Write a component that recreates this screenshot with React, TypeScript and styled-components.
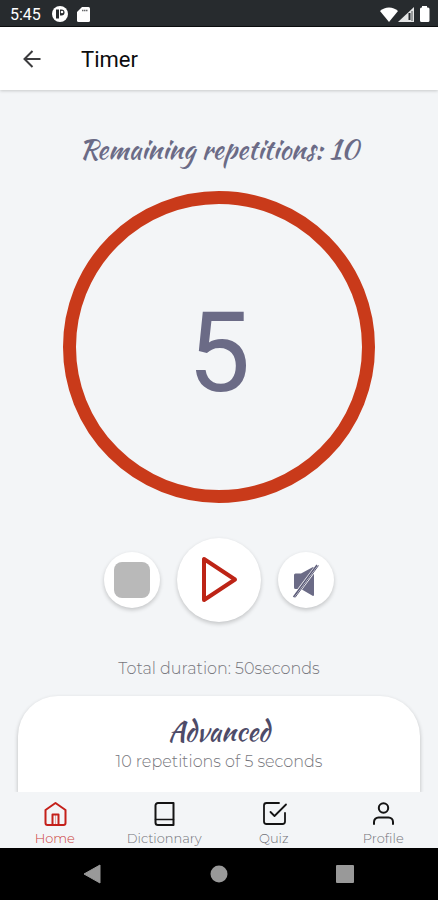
import React from "react";
import styled, { createGlobalStyle } from "styled-components";

const GlobalStyle = createGlobalStyle`
  *, *::before, *::after { box-sizing: border-box; }
  body { margin: 0; background: #f3f5f7; font-family: Roboto, sans-serif; }
  h1, h2, p { margin: 0; }
  button { font: inherit; border: 0; padding: 0; cursor: pointer; }
`;

const Screen = styled.div`
  display: flex;
  flex-direction: column;
  height: 100vh;
  background: #f3f5f7;
`;

const StatusBar = styled.div`
  flex: none;
  display: flex;
  align-items: center;
  justify-content: space-between;
  height: 27px;
  padding: 2px 8px 0 10px;
  background: #272b2e;
  border-bottom: 1px solid #0c0e0f;
  color: #fff;
  font-size: 16px;
`;

const StatusGroup = styled.div<{ $gap: number }>`
  display: flex;
  align-items: center;
  gap: ${(p) => p.$gap}px;
`;

const Clock = styled.span`
  margin-right: 2px;
`;

const Header = styled.header`
  flex: none;
  display: flex;
  align-items: center;
  gap: 37px;
  height: 63px;
  padding: 3px 20px 0;
  background: #fff;
  box-shadow: 0 1px 3px rgba(0, 0, 0, 0.18);
  z-index: 1;
`;

const BackButton = styled.button`
  display: flex;
  background: none;
`;

const Title = styled.h1`
  font-size: 22px;
  font-weight: 400;
  line-height: 28px;
  color: #0c0c0e;
`;

const Main = styled.main`
  flex: 1;
  min-height: 0;
  display: flex;
  flex-direction: column;
  align-items: center;
  padding: 42px 18px 0;
  overflow: hidden;
`;

const ScriptHeading = styled.h2<{ $tone: string }>`
  font-family: "Kaushan Script", "Liberation Serif", serif;
  font-size: 27px;
  font-weight: 400;
  line-height: 36px;
  color: ${(p) => p.$tone};
`;

const Dial = styled.div`
  flex: none;
  display: flex;
  align-items: center;
  justify-content: center;
  width: 312px;
  height: 312px;
  margin-top: 23px;
  padding-top: 12px;
  border: 13px solid #c93a1a;
  border-radius: 50%;
  color: #6b6b86;
  font-size: 112px;
  line-height: 120px;
`;

const Controls = styled.div`
  flex: none;
  display: flex;
  align-items: center;
  gap: 17px;
  margin-top: 35px;
`;

const RoundButton = styled.button<{ $size: number }>`
  display: flex;
  align-items: center;
  justify-content: center;
  width: ${(p) => p.$size}px;
  height: ${(p) => p.$size}px;
  border-radius: 50%;
  background: #fff;
  box-shadow: 0 2px 4px rgba(0, 0, 0, 0.2);
`;

const StopShape = styled.span`
  width: 36px;
  height: 36px;
  border-radius: 8px;
  background: #b9b9b9;
`;

const Caption = styled.p`
  font-family: Montserrat, Inter, sans-serif;
  font-size: 16px;
  font-weight: 300;
  line-height: 24px;
  color: #77777d;
`;

const Duration = styled(Caption)`
  margin-top: 35px;
`;

const Card = styled.section`
  flex: 1 0 auto;
  align-self: stretch;
  display: flex;
  flex-direction: column;
  align-items: center;
  margin-top: 15px;
  padding-top: 18px;
  border-radius: 40px 40px 0 0;
  background: #fff;
  box-shadow: 0 2px 4px rgba(0, 0, 0, 0.24);
`;

const TabBar = styled.nav`
  flex: none;
  display: grid;
  grid-template-columns: repeat(4, 1fr);
  height: 56px;
  background: #f3f5f7;
`;

const Tab = styled.a<{ $active?: boolean }>`
  display: flex;
  flex-direction: column;
  align-items: center;
  padding-top: 8px;
  color: ${(p) => (p.$active ? "#c4201a" : "#141414")};
  text-decoration: none;
`;

const TabLabel = styled.span<{ $active?: boolean }>`
  font-family: Montserrat, Inter, sans-serif;
  font-size: 13px;
  font-weight: 300;
  line-height: 20px;
  color: ${(p) => (p.$active ? "#cc403c" : "#727278")};
`;

const SystemBar = styled.div`
  flex: none;
  display: flex;
  align-items: center;
  justify-content: space-between;
  height: 52px;
  padding: 0 84px 0 83px;
  background: #000;
`;

const SystemButton = styled.button`
  display: flex;
  background: none;
`;

const line = {
  fill: "none",
  stroke: "currentColor",
  strokeWidth: 2,
  strokeLinecap: "round",
  strokeLinejoin: "round",
} as const;

const HomeIcon = () => (
  <svg width="28" height="28" viewBox="0 0 28 28" {...line}>
    <path d="M4.500 10 14.500 3l10 7v13a2 2 0 0 1-2 2h-16a2 2 0 0 1-2-2z" />
    <path d="M11.500 25V14.500h6V25" />
    <path d="M14.500 15v10" strokeWidth="1" opacity="0.35" />
  </svg>
);

const BookIcon = () => (
  <svg width="28" height="28" viewBox="0 0 28 28" {...line}>
    <path d="M5.500 22.500v-17A2.500 2.500 0 0 1 8 3h15.500v22H8a2.500 2.500 0 0 1-2.500-2.500z" />
    <path d="M5.500 19.500h18" strokeWidth="1.500" />
  </svg>
);

const QuizIcon = () => (
  <svg width="28" height="28" viewBox="0 0 28 28" {...line} strokeWidth="1.800">
    <path d="m10.500 12 4 4L26 4.500" />
    <path d="M25 13v8.500a2.500 2.500 0 0 1-2.500 2.500h-16A2.500 2.500 0 0 1 4 21.500v-16A2.500 2.500 0 0 1 6.500 3H19" />
  </svg>
);

const ProfileIcon = () => (
  <svg width="28" height="28" viewBox="0 0 28 28" {...line}>
    <circle cx="14.500" cy="8" r="4.700" />
    <path d="M5 24v-2a4.500 4.500 0 0 1 4.500-4.500h10A4.500 4.500 0 0 1 24 22v2" />
  </svg>
);

const tabs = [
  { label: "Home", icon: <HomeIcon />, active: true },
  { label: "Dictionnary", icon: <BookIcon /> },
  { label: "Quiz", icon: <QuizIcon /> },
  { label: "Profile", icon: <ProfileIcon /> },
];

export default function App() {
  return (
    <Screen>
      <GlobalStyle />
      <StatusBar>
        <StatusGroup $gap={9}>
          <Clock>5:45</Clock>
          <svg width="16" height="16" viewBox="0 0 16 16">
            <circle cx="8" cy="8" r="8" fill="#fff" />
            <path d="M4 3.500h3v9H4z" fill="#272b2e" />
            <path d="M8 3.500h1.500a3 3 0 0 1 0 6H8z" fill="#272b2e" />
            <circle cx="10" cy="6" r="1.300" fill="#fff" />
          </svg>
          <svg width="13" height="15" viewBox="0 0 13 15">
            <path d="M5 0h6.500A1.500 1.500 0 0 1 13 1.500v12a1.500 1.500 0 0 1-1.500 1.500h-10A1.500 1.500 0 0 1 0 13.500V5z" fill="#fff" />
            <path d="M5 3.500h6" stroke="#272b2e" strokeWidth="1.500" strokeDasharray="1.500 0.500" opacity="0.7" />
          </svg>
        </StatusGroup>
        <StatusGroup $gap={0}>
          <svg width="18" height="15" viewBox="0 0 18 15">
            <path d="M0 4a13 13 0 0 1 18 0L9 15z" fill="#fff" />
          </svg>
          <svg width="16" height="15" viewBox="0 0 16 15">
            <path d="M0 15 16 0v15z" fill="#e4e5e5" />
            <path d="M11.500 6v7" stroke="#272b2e" strokeWidth="2" />
            <path d="M14 4v10" stroke="#9a9c9d" strokeWidth="2" />
          </svg>
          <svg width="16" height="16" viewBox="0 0 16 16">
            <path d="M8 0h5v1.500h1A1.500 1.500 0 0 1 15.500 3v11.500A1.500 1.500 0 0 1 14 16H7.500A1.500 1.500 0 0 1 6 14.500V3a1.500 1.500 0 0 1 1.500-1.500H8z" fill="#fff" />
          </svg>
        </StatusGroup>
      </StatusBar>

      <Header>
        <BackButton type="button" aria-label="Back">
          <svg width="24" height="24" viewBox="0 0 24 24" {...line} stroke="#3c3c3e">
            <path d="M20.500 11h-16M12.500 3l-8 8 8 8" strokeLinecap="butt" strokeLinejoin="miter" />
          </svg>
        </BackButton>
        <Title>Timer</Title>
      </Header>

      <Main>
        <ScriptHeading $tone="#6b6b86">Remaining repetitions: 10</ScriptHeading>
        <Dial role="timer">5</Dial>
        <Controls>
          <RoundButton type="button" $size={56} aria-label="Stop">
            <StopShape />
          </RoundButton>
          <RoundButton type="button" $size={84} aria-label="Play">
            <svg width="40" height="48" viewBox="0 0 40 48" {...line} stroke="#bd2416" strokeWidth="4">
              <path d="M5 3v41l31-20.500z" />
            </svg>
          </RoundButton>
          <RoundButton type="button" $size={56} aria-label="Unmute">
            <svg width="30" height="36" viewBox="0 0 30 36">
              <path d="M3 13a1.500 1.500 0 0 1 1.500-1.500H10L22 5a1 1 0 0 1 1 1v27a1 1 0 0 1-1 1L10 27H4.500A1.500 1.500 0 0 1 3 25.500z" fill="#6b6b86" />
              <path d="M3 35 27 3" stroke="#fff" strokeWidth="4" />
              <path d="M2.500 35 26 3" stroke="#5b5b78" strokeWidth="1.500" />
              <path d="M4 35.500 27.500 3.500" stroke="#5b5b78" strokeWidth="1" />
            </svg>
          </RoundButton>
        </Controls>
        <Duration>Total duration: 50seconds</Duration>
        <Card>
          <ScriptHeading $tone="#4e4b68">Advanced</ScriptHeading>
          <Caption>10 repetitions of 5 seconds</Caption>
        </Card>
      </Main>

      <TabBar>
        {tabs.map((t) => (
          <Tab key={t.label} href="#" $active={t.active}>
            {t.icon}
            <TabLabel $active={t.active}>{t.label}</TabLabel>
          </Tab>
        ))}
      </TabBar>

      <SystemBar>
        <SystemButton type="button" aria-label="System back">
          <svg width="18" height="20" viewBox="0 0 18 20">
            <path d="M17 1v18L1 10z" fill="#999" stroke="#999" strokeLinejoin="round" />
          </svg>
        </SystemButton>
        <SystemButton type="button" aria-label="System home">
          <svg width="18" height="18" viewBox="0 0 18 18">
            <circle cx="9" cy="9" r="8.500" fill="#999" />
          </svg>
        </SystemButton>
        <SystemButton type="button" aria-label="Recent apps">
          <svg width="18" height="18" viewBox="0 0 18 18">
            <rect width="18" height="18" rx="1" fill="#999" />
          </svg>
        </SystemButton>
      </SystemBar>
    </Screen>
  );
}
